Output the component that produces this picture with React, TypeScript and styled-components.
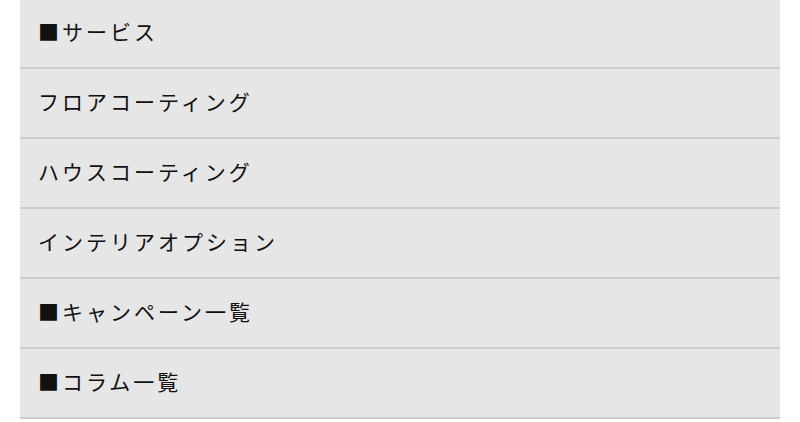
import * as React from "react";
import styled, { createGlobalStyle } from "styled-components";

const GlobalStyle = createGlobalStyle`
  html, body {
    margin: 0;
    padding: 0;
    background: #ffffff;
  }
`;

const Page = styled.div`
  padding: 0 20px;
`;

const Menu = styled.ul`
  list-style: none;
  margin: 0;
  padding: 0;
  background-color: #e6e6e6;
`;

const Item = styled.li`
  display: flex;
  align-items: center;
  box-sizing: border-box;
  height: 70px;
  padding: 0 0 5px 18px;
  border-bottom: 2px solid #cccccc;
  font-family: "Noto Sans CJK JP", "Noto Sans", sans-serif;
  font-size: 21px;
  letter-spacing: 3px;
  color: #111111;

  &:first-child {
    height: 69px;
  }
`;

const items = [
  "■サービス",
  "フロアコーティング",
  "ハウスコーティング",
  "インテリアオプション",
  "■キャンペーン一覧",
  "■コラム一覧",
];

const App: React.FC = () => {
  return (
    <Page>
      <GlobalStyle />
      <Menu>
        {items.map((label) => (
          <Item key={label}>{label}</Item>
        ))}
      </Menu>
    </Page>
  );
};

export default App;
